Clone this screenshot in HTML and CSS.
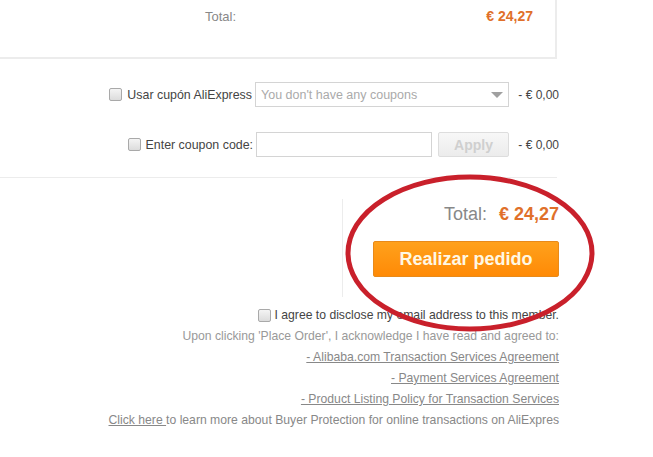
FILE: index.html
```html
<!DOCTYPE html>
<html>
<head>
<meta charset="utf-8">
<link rel="stylesheet" href="styles.css">
</head>
<body>
<div class="page">
  <div class="summary">
    <span class="summary-label">Total:</span>
    <span class="summary-amount">€ 24,27</span>
  </div>

  <div class="coupons">
    <div class="coupon-row">
      <span class="check"></span>
      <span class="coupon-label">Usar cupón AliExpress</span>
      <div class="select">
        <span class="select-text">You don't have any coupons</span>
        <span class="select-arrow"></span>
      </div>
      <span class="discount">- € 0,00</span>
    </div>
    <div class="coupon-row row2">
      <span class="check"></span>
      <span class="coupon-label">Enter coupon code:</span>
      <div class="code-input"></div>
      <span class="apply">Apply</span>
      <span class="discount">- € 0,00</span>
    </div>
  </div>

  <div class="divider"></div>

  <div class="checkout">
    <div class="checkout-box">
      <div class="grand-total">
        <span class="gt-label">Total:</span>
        <span class="gt-amount">€ 24,27</span>
      </div>
      <div class="place-order">Realizar pedido</div>
    </div>
  </div>

  <div class="terms">
    <div class="terms-line agree"><span class="check"></span><span>I agree to disclose my email address to this member.</span></div>
    <div class="terms-line muted">Upon clicking 'Place Order', I acknowledge I have read and agreed to:</div>
    <div class="terms-line"><a class="link">- Alibaba.com Transaction Services Agreement</a></div>
    <div class="terms-line"><a class="link">- Payment Services Agreement</a></div>
    <div class="terms-line"><a class="link">- Product Listing Policy for Transaction Services</a></div>
    <div class="terms-line protect"><a class="link">Click here </a>to learn more about Buyer Protection for online transactions on AliExpres</div>
  </div>
</div>

<svg class="circle" width="653" height="457" viewBox="0 0 653 457">
  <ellipse cx="470" cy="253" rx="122" ry="76" fill="none" stroke="#c9202b" stroke-width="5"/>
</svg>
</body>
</html>
```

FILE: styles.css
```css
html, body {
  margin: 0;
  padding: 0;
  background: #fff;
}
body {
  width: 653px;
  height: 457px;
  overflow: hidden;
  position: relative;
  font-family: "Liberation Sans", Arial, sans-serif;
  font-size: 12px;
  color: #444;
}
.page {
  width: 559px;
}
.summary {
  width: 555px;
  height: 57px;
  border-right: 2px solid #ececec;
  border-bottom: 2px solid #ececec;
  display: flex;
  align-items: flex-start;
  box-sizing: content-box;
}
.summary-label {
  margin-left: 205px;
  margin-top: 9px;
  color: #888;
  font-size: 13px;
}
.summary-amount {
  margin-left: auto;
  margin-right: 22px;
  margin-top: 8px;
  color: #e0702a;
  font-weight: bold;
  font-size: 14px;
}
.coupons {
  margin-top: 23px;
}
.coupon-row {
  display: flex;
  justify-content: flex-end;
  align-items: center;
  height: 25px;
}
.row2 {
  margin-top: 25px;
}
.check {
  display: inline-block;
  width: 11px;
  height: 11px;
  border: 1px solid #a9a9a9;
  border-radius: 2px;
  background: linear-gradient(#f4f4f4, #dcdcdc);
  margin-right: 5px;
  flex: none;
}
.coupon-label {
  font-size: 12.4px;
  color: #444;
  margin-right: 3px;
}
.select {
  height: 23px;
  border: 1px solid #d4d4d4;
  display: flex;
  align-items: center;
  padding: 0 5px;
  box-sizing: content-box;
  width: 242px;
  margin-right: 8px;
}
.select-text {
  color: #aaa;
  font-size: 12.5px;
}
.select-arrow {
  margin-left: auto;
  width: 0;
  height: 0;
  border-left: 6px solid transparent;
  border-right: 6px solid transparent;
  border-top: 6px solid #a0a0a0;
}
.discount {
  width: 42px;
  text-align: right;
  font-size: 12px;
  color: #444;
}
.code-input {
  width: 174px;
  height: 23px;
  border: 1px solid #d4d4d4;
  margin-right: 6px;
}
.apply {
  width: 69px;
  height: 23px;
  border: 1px solid #ddd;
  border-radius: 2px;
  background: linear-gradient(#f7f7f7, #ececec);
  color: #cfcfcf;
  font-weight: bold;
  font-size: 14px;
  display: flex;
  align-items: center;
  justify-content: center;
  margin-right: 8px;
}
.divider {
  margin-top: 20px;
  height: 1px;
  width: 557px;
  background: #ececec;
}
.checkout {
  margin-top: 21px;
  display: flex;
  justify-content: flex-end;
}
.checkout-box {
  width: 216px;
  height: 98px;
  border-left: 1px solid #ececec;
  display: flex;
  flex-direction: column;
  align-items: flex-end;
}
.grand-total {
  margin-top: 4px;
  font-size: 18px;
  line-height: 22px;
}
.gt-label {
  color: #888;
}
.gt-amount {
  color: #e0702a;
  font-weight: bold;
  margin-left: 7px;
}
.place-order {
  margin-top: 16px;
  width: 186px;
  height: 36px;
  border: 1px solid #e88a1a;
  border-radius: 2px;
  background: linear-gradient(#ffa11c, #ff8a06);
  color: #fff8e4;
  font-weight: bold;
  font-size: 18px;
  display: flex;
  align-items: center;
  justify-content: center;
  box-sizing: border-box;
}
.terms {
  margin-top: 8px;
  text-align: right;
}
.terms-line {
  line-height: 21px;
  height: 21px;
  color: #888;
  font-size: 12.2px;
}
.agree {
  display: flex;
  justify-content: flex-end;
  align-items: center;
  color: #444;
}
.agree .check {
  margin-right: 4px;
}
.muted {
  color: #999;
}
.link {
  color: #888;
  text-decoration: underline;
}
.protect {
  color: #888;
}
.circle {
  position: absolute;
  left: 0;
  top: 0;
  pointer-events: none;
}
```
